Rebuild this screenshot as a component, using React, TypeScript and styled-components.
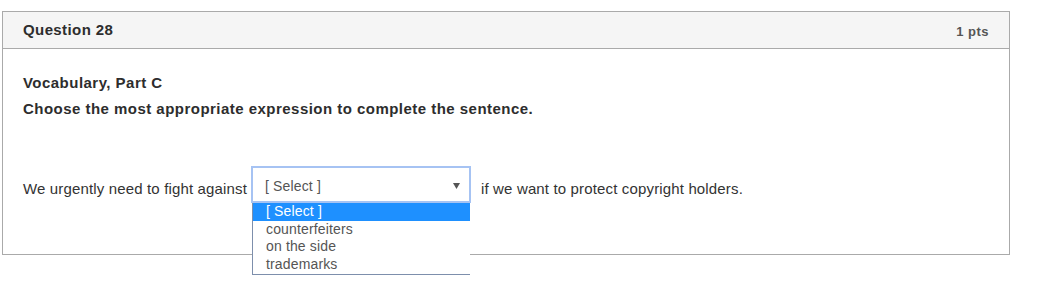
import React, { useState } from "react";
import styled, { createGlobalStyle } from "styled-components";

const GlobalStyle = createGlobalStyle`
  body {
    margin: 0;
    background: #ffffff;
    font-family: "Liberation Sans", Arial, Helvetica, sans-serif;
    color: #333333;
  }
`;

const Page = styled.div`
  min-height: 291px;
  box-sizing: border-box;
  padding: 11px 0 0 2px;
`;

const QuestionCard = styled.div`
  width: 1008px;
  box-sizing: border-box;
  border: 1px solid #aaaaaa;
  background: #ffffff;
`;

const QuestionHeader = styled.div`
  display: flex;
  align-items: center;
  justify-content: space-between;
  height: 36px;
  padding: 0 20px;
  background: #f5f5f5;
  border-bottom: 1px solid #aaaaaa;
`;

const QuestionTitle = styled.h2`
  margin: 0;
  font-size: 15px;
  line-height: 20px;
  font-weight: 700;
  letter-spacing: 0.4px;
  color: #2d2d2d;
`;

const Points = styled.span`
  font-size: 13px;
  font-weight: 700;
  letter-spacing: 0.5px;
  color: #555555;
  padding-top: 2px;
`;

const QuestionBody = styled.div`
  padding: 24px 20px 51px;
`;

const Lead = styled.p<{ $gap: number }>`
  margin: ${(p) => p.$gap}px 0 0;
  font-size: 15px;
  line-height: 20px;
  font-weight: 700;
  letter-spacing: 0.47px;
  color: #2d2d2d;
`;

const SentenceRow = styled.div`
  display: flex;
  align-items: flex-start;
  margin-top: 47px;
`;

const SentenceText = styled.span<{ $side: "left" | "right" }>`
  margin-top: 13px;
  font-size: 15px;
  line-height: 20px;
  letter-spacing: 0.15px;
  color: #333333;
  margin-${(p) => (p.$side === "left" ? "right" : "left")}: ${(p) => (p.$side === "left" ? 4 : 10)}px;
`;

const SelectWrap = styled.div`
  position: relative;
  width: 220px;
`;

const SelectBox = styled.div`
  display: flex;
  align-items: center;
  justify-content: space-between;
  height: 37px;
  box-sizing: border-box;
  padding: 3px 9px 0 12px;
  border: 2px solid #a6c3f3;
  background: #ffffff;
  font-size: 14px;
  line-height: 17px;
  letter-spacing: 0.15px;
  color: #555555;
  cursor: pointer;
`;

const OptionList = styled.ul`
  position: absolute;
  top: 37px;
  left: 1px;
  width: 218px;
  margin: 0;
  padding: 0 0 1px;
  list-style: none;
  box-sizing: border-box;
  background: #ffffff;
  border-left: 1px solid #7d8fac;
  border-bottom: 1px solid #7d8fac;
  z-index: 2;
`;

const OptionItem = styled.li<{ $active: boolean }>`
  height: 17.5px;
  padding-left: 13px;
  font-size: 14px;
  line-height: 17.5px;
  letter-spacing: 0.15px;
  color: ${(p) => (p.$active ? "#ffffff" : "#555555")};
  background: ${(p) => (p.$active ? "#1e90ff" : "transparent")};
  cursor: default;
`;

const options = ["[ Select ]", "counterfeiters", "on the side", "trademarks"];

function Arrow() {
  return (
    <svg width="7" height="6" viewBox="0 0 7 6">
      <polygon points="0,0 7,0 3.5,6" fill="#555555" />
    </svg>
  );
}

export default function App() {
  const [selected, setSelected] = useState<number>(0);
  const [open, setOpen] = useState<boolean>(true);

  return (
    <Page>
      <GlobalStyle />
      <QuestionCard>
        <QuestionHeader>
          <QuestionTitle>Question 28</QuestionTitle>
          <Points>1 pts</Points>
        </QuestionHeader>
        <QuestionBody>
          <Lead $gap={0}>Vocabulary, Part C</Lead>
          <Lead $gap={6}>Choose the most appropriate expression to complete the sentence.</Lead>
          <SentenceRow>
            <SentenceText $side="left">We urgently need to fight against</SentenceText>
            <SelectWrap>
              <SelectBox onClick={() => setOpen(!open)}>
                <span>{options[selected]}</span>
                <Arrow />
              </SelectBox>
              {open && (
                <OptionList>
                  {options.map((o, i) => (
                    <OptionItem
                      key={o}
                      $active={i === selected}
                      onClick={() => {
                        setSelected(i);
                        setOpen(false);
                      }}
                    >
                      {o}
                    </OptionItem>
                  ))}
                </OptionList>
              )}
            </SelectWrap>
            <SentenceText $side="right">if we want to protect copyright holders.</SentenceText>
          </SentenceRow>
        </QuestionBody>
      </QuestionCard>
    </Page>
  );
}
